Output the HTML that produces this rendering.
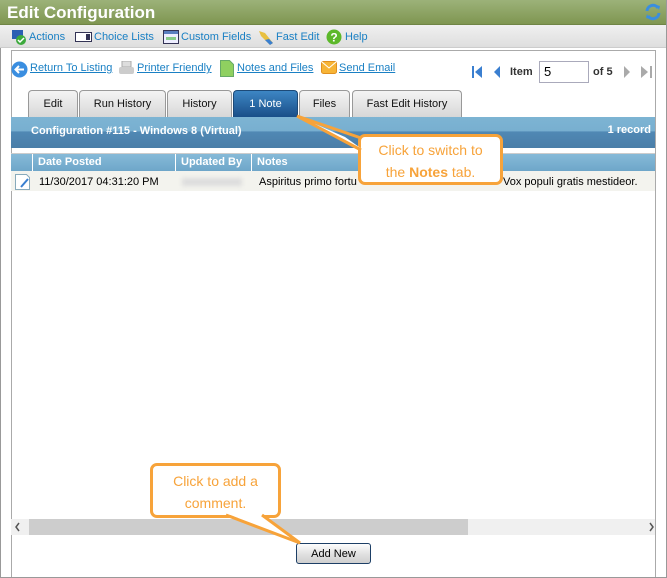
<!DOCTYPE html>
<html><head><style>
*{box-sizing:border-box;margin:0;padding:0}
body{width:667px;height:578px;overflow:hidden;background:#fff;font-family:"Liberation Sans",Arial,sans-serif;position:relative;font-size:11px}
.abs{position:absolute}
a{color:#1a80c4;text-decoration:underline}
.title{left:0;top:0;width:667px;height:25px;background:linear-gradient(#9cb279,#7f9651);color:#fff;font-weight:bold;font-size:17px;padding:3px 0 0 7px;border-bottom:1px solid #6f8545}
.tb{left:0;top:25px;width:667px;height:23px;background:linear-gradient(#f0f0f0,#dedede);border-bottom:1px solid #ccc}
.tb span{position:absolute;top:6px;color:#1a80c4;font-size:11px}
.frame{left:11px;top:50px;width:645px;height:528px;border:1px solid #aaa;border-bottom:none}
.outer{left:666px;top:0;width:1px;height:578px;background:#999}
.outerl{left:0;top:0;width:1px;height:578px;background:#999}
.outerb{left:0;top:577px;width:667px;height:1px;background:#999}
.lnk{top:62px;font-size:11px}
.tab{top:90px;height:28px;border:1px solid #999;border-bottom:none;border-radius:4px 4px 0 0;background:linear-gradient(#f4f4f4,#d6d6d6);font-size:11px;text-align:center;padding-top:7px;color:#111}
.hdr{left:11px;top:117px;width:644px;height:31px;background:linear-gradient(#7db4d3,#78afd0 45%,#5088b4 48%,#4a7ea8);color:#fff;font-weight:bold;font-size:11px}
.th{top:154px;height:17px;background:linear-gradient(#86bad8,#6ea6c9);color:#fff;font-weight:bold;font-size:11px;padding:2px 0 0 5px;border-right:1px solid #fff}
.co{border:3px solid #f7a33a;border-radius:7px;background:#fff;color:#f7a33a;font-size:14px;text-align:center;line-height:22px}
</style></head><body>
<div class="abs outerl"></div>
<div class="abs title">Edit Configuration</div>
<svg class="abs" style="left:644px;top:3px" width="18" height="18" viewBox="0 0 18 18"><path d="M3 8a6 6 0 0 1 11-3" stroke="#3a8ee0" stroke-width="3" fill="none"/><path d="M15 10a6 6 0 0 1-11 3" stroke="#3a8ee0" stroke-width="3" fill="none"/><path d="M12 2l4 1-1 4z M6 16l-4-1 1-4z" fill="#3a8ee0"/></svg>
<div class="abs tb">
<svg class="abs" style="left:11px;top:4px" width="16" height="16"><rect x="1" y="1" width="11" height="9" fill="#2b5fb3"/><circle cx="10" cy="11" r="5" fill="#3daa3d"/><path d="M7 11l2 2 4-4" stroke="#fff" stroke-width="1.5" fill="none"/></svg>
<span style="left:29px">Actions</span>
<svg class="abs" style="left:75px;top:7px" width="17" height="10"><rect x="0.5" y="0.5" width="16" height="9" fill="#fff" stroke="#335"/><rect x="11" y="2" width="4" height="6" fill="#335"/></svg>
<span style="left:94px">Choice Lists</span>
<svg class="abs" style="left:163px;top:5px" width="16" height="14"><rect x="0.5" y="0.5" width="15" height="13" fill="#eef" stroke="#335"/><rect x="1" y="1" width="14" height="3" fill="#5a7fc0"/><rect x="3" y="7" width="10" height="3" fill="#8c8"/></svg>
<span style="left:181px">Custom Fields</span>
<svg class="abs" style="left:257px;top:4px" width="18" height="17"><path d="M2 2l6 2 8 10-3 2-9-9z" fill="#e8c040"/><path d="M8 11l5 5 3-2-4-4z" fill="#3a7fd0"/></svg>
<span style="left:276px">Fast Edit</span>
<svg class="abs" style="left:326px;top:4px" width="16" height="16"><circle cx="8" cy="8" r="7.5" fill="#5cb82a"/><text x="8" y="12.5" font-size="12" font-weight="bold" fill="#fff" text-anchor="middle" font-family="Liberation Sans">?</text></svg>
<span style="left:345px">Help</span>
</div>
<div class="abs frame"></div>
<div class="abs outer"></div>
<div class="abs outerb"></div>
<svg class="abs" style="left:11px;top:61px" width="17" height="17"><circle cx="8.5" cy="8.5" r="8" fill="#3a8ee0"/><path d="M13 8.5H5M8 5l-3.5 3.5L8 12" stroke="#fff" stroke-width="2" fill="none"/></svg>
<a class="abs lnk" style="left:30px">Return To Listing</a>
<svg class="abs" style="left:118px;top:61px" width="17" height="16"><rect x="4" y="0" width="9" height="6" fill="#ddd" stroke="#aaa"/><rect x="1" y="6" width="15" height="7" rx="2" fill="#ccc"/></svg>
<a class="abs lnk" style="left:137px">Printer Friendly</a>
<svg class="abs" style="left:220px;top:60px" width="14" height="17"><path d="M0.5 0.5h9l4 4v12h-13z" fill="#8fd060" stroke="#6a6"/></svg>
<a class="abs lnk" style="left:237px">Notes and Files</a>
<svg class="abs" style="left:321px;top:61px" width="16" height="13"><rect x="0.5" y="0.5" width="15" height="12" rx="2" fill="#f7b436" stroke="#e09020"/><path d="M1 1l7 6 7-6" stroke="#fff" fill="none"/></svg>
<a class="abs lnk" style="left:339px">Send Email</a>
<svg class="abs" style="left:472px;top:66px" width="40" height="13"><rect x="0" y="0" width="2" height="12" fill="#3a7fd0"/><path d="M10 0v12l-7-6z" fill="#3a7fd0"/><path d="M28 0v12l-6-6z" fill="#3a7fd0"/></svg>
<span class="abs" style="left:510px;top:66px;font-weight:bold;color:#333;font-size:11px">Item</span>
<div class="abs" style="left:539px;top:61px;width:50px;height:22px;border:1px solid #aab;font-size:13px;padding:2px 0 0 4px">5</div>
<span class="abs" style="left:593px;top:66px;font-weight:bold;color:#333">of 5</span>
<svg class="abs" style="left:622px;top:66px" width="32" height="13"><path d="M2 0v12l6-6z" fill="#aaa"/><path d="M19 0v12l7-6z" fill="#aaa"/><rect x="28" y="0" width="2" height="12" fill="#aaa"/></svg>
<div class="abs tab" style="left:28px;width:50px">Edit</div>
<div class="abs tab" style="left:79px;width:87px">Run History</div>
<div class="abs tab" style="left:167px;width:65px">History</div>
<div class="abs tab" style="left:233px;width:65px;background:linear-gradient(#3d86c4,#184c86);color:#fff;border-color:#1d4a78">1 Note</div>
<div class="abs tab" style="left:299px;width:51px">Files</div>
<div class="abs tab" style="left:352px;width:110px">Fast Edit History</div>
<div class="abs hdr"><span class="abs" style="left:20px;top:8px">Configuration #115 - Windows 8 (Virtual)</span><span class="abs" style="right:4px;top:7px">1 record</span></div>
<div class="abs" style="left:11px;top:153px;width:644px;height:1px;background:#ccc"></div>
<div class="abs th" style="left:11px;width:22px"></div>
<div class="abs th" style="left:33px;width:143px">Date Posted</div>
<div class="abs th" style="left:176px;width:76px">Updated By</div>
<div class="abs th" style="left:252px;width:403px;border-right:none">Notes</div>
<div class="abs" style="left:11px;top:171px;width:644px;height:20px;background:#f3f3ee"></div>
<svg class="abs" style="left:15px;top:174px" width="16" height="16"><path d="M0.5 0.5h11l3 3v12h-14z" fill="#fff" stroke="#8ab"/><path d="M6 13l7-8" stroke="#3a7fd0" stroke-width="2"/></svg>
<span class="abs" style="left:39px;top:176px">11/30/2017 04:31:20 PM</span>
<div class="abs" style="left:182px;top:178px;width:60px;height:8px;background:#ddd;filter:blur(2px)"></div>
<span class="abs" style="left:259px;top:176px">Aspiritus primo fortu</span>
<span class="abs" style="left:503px;top:176px">Vox populi gratis mestideor.</span>
<div class="abs" style="left:11px;top:519px;width:644px;height:16px;background:#f0f0f0"></div>
<div class="abs" style="left:29px;top:519px;width:439px;height:16px;background:#cdcdcd"></div>
<svg class="abs" style="left:14px;top:522px" width="640" height="10"><path d="M5 1L2 5l3 4M636 1l3 4-3 4" stroke="#555" stroke-width="1.5" fill="none"/></svg>
<div class="abs" style="left:296px;top:543px;width:75px;height:21px;border:1px solid #1d3f66;border-radius:3px;background:linear-gradient(#fdfdfd,#e0e0e0 55%,#cfcfcf);text-align:center;padding-top:4px;font-size:11px">Add New</div>
<div class="abs co" style="left:358px;top:134px;width:145px;height:51px;padding-top:2px">Click to switch to<br>the <b>Notes</b> tab.</div>
<div class="abs co" style="left:150px;top:463px;width:131px;height:55px;padding-top:4px">Click to add a<br>comment.</div>
<svg class="abs" style="left:0;top:0" width="667" height="578"><path d="M345 137L297 116L362 149" fill="#fff"/><path d="M297 116L361 138M297 116L361 150" stroke="#f7a33a" stroke-width="3" fill="none"/><path d="M228 514L300 543L262 514z" fill="#fff"/><path d="M226 515L300 543L262 515" stroke="#f7a33a" stroke-width="3" fill="none"/></svg>
</body></html>
